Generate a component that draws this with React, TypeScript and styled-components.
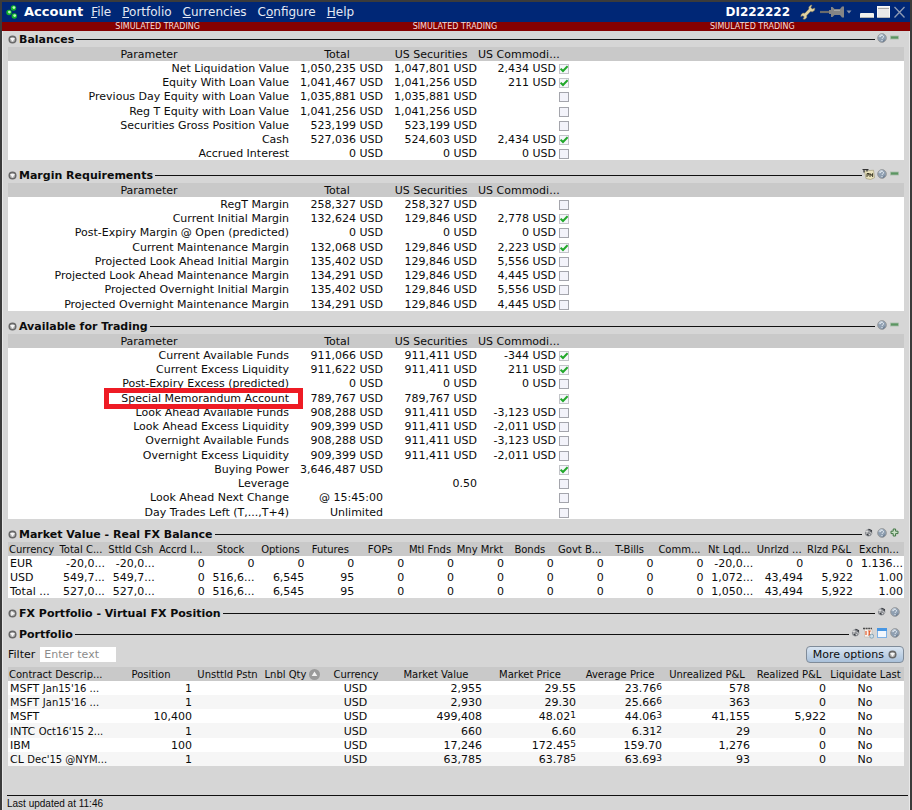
import React, { useState } from "react";
import styled, { createGlobalStyle } from "styled-components";

const GlobalStyle = createGlobalStyle`
  *, *::before, *::after { box-sizing: border-box; }
  body {
    margin: 0;
    background: #d6d6d6;
    color: #0c0c0c;
    font: 11px/14px "DejaVu Sans", Verdana, sans-serif;
  }
  button, input { font: inherit; color: inherit; }
`;

/* ---------- window frame ---------- */

const Window = styled.div`
  display: flex;
  flex-direction: column;
  min-height: 100vh;
  border: solid #3b3b3b;
  border-width: 2px 2px 0;
`;

const TitleBar = styled.header`
  display: flex;
  align-items: center;
  height: 20px;
  padding: 0 4px;
  background: #002776;
  color: #e4e9f4;
`;

const AppName = styled.h1`
  margin: 0 8px 0 5px;
  font-size: 13px;
  line-height: 20px;
  color: #fff;
`;

const Menu = styled.nav`
  display: flex;
  gap: 11px;
`;

const MenuButton = styled.button`
  padding: 0;
  border: 0;
  background: none;
  font-size: 12px;
  line-height: 20px;
  color: #e4e9f4;
`;

const AccountId = styled.span`
  margin-left: auto;
  font-size: 12px;
  font-weight: bold;
  color: #fff;
`;

const IconButton = styled.button`
  display: flex;
  align-items: center;
  justify-content: center;
  padding: 0;
  border: 0;
  background: none;
  svg { display: block; }
`;

const WindowTools = styled.div`
  display: flex;
  align-items: center;
  gap: 3px;
  margin-left: 10px;
`;

const FrameButtons = styled(WindowTools)`
  margin-left: 5px;
`;

const Banner = styled.div`
  display: grid;
  grid-template-columns: repeat(3, 1fr);
  padding: 0 9px 0 7px;
  background: #850000;
  color: #f3dede;
  font-size: 8px;
  line-height: 9px;
  text-align: center;
`;

const Body = styled.main`
  display: flex;
  flex: 1;
  flex-direction: column;
  padding: 1px 5px 0;
  border: solid #e8e8e8;
  border-width: 0 1px;
  background: #d6d6d6;
`;

/* ---------- sections ---------- */

const Section = styled.section<{ $gap?: number }>`
  margin-bottom: ${(p) => p.$gap ?? 8}px;
`;

const SectionHead = styled.div`
  display: flex;
  align-items: center;
  height: 15px;
`;

const SectionTitle = styled.h2`
  margin: 0 2px;
  font-size: 11px;
  line-height: 15px;
  white-space: nowrap;
`;

const Rule = styled.hr`
  flex: 1;
  height: 1px;
  margin: 0;
  border: 0;
  background: #111;
`;

const SectionTools = styled.div`
  display: flex;
  align-self: flex-start;
  padding-right: 3px;
`;

const ToolButton = styled(IconButton)`
  width: 13px;
  height: 11px;
`;

/* ---------- tables ---------- */

const Table = styled.table`
  width: 100%;
  table-layout: fixed;
  border-collapse: collapse;
  background: #fff;

  th, td {
    height: 14px;
    padding: 2px 1px 0 0;
    line-height: 12px;
    font-weight: normal;
    text-align: right;
    white-space: nowrap;
  }
  thead th {
    padding-right: 0;
    background: #c9c9c9;
    text-align: center;
  }
  tbody tr:nth-child(4n) > * { height: 15px; }
`;

const DenseTable = styled(Table)`
  thead th { font-size: 10px; }
  tbody th { padding-left: 2px; text-align: left; }
  thead th:first-child { padding-left: 1px; text-align: left; }
`;

const StripedTable = styled(DenseTable)`
  tbody tr:nth-child(even) { background: #f6f6f6; }
`;

const Col = styled.col<{ $w?: number }>`
  width: ${(p) => (p.$w ? `${p.$w}px` : "auto")};
`;

const LabelCell = styled.th`
  position: relative;
`;

const Highlight = styled.span`
  position: absolute;
  z-index: 1;
  inset: -2px -13px -4px 96px;
  border: 5px solid #ee1b24;
  pointer-events: none;
`;

const CheckCell = styled.td`
  && { text-align: left; }
`;

const tick =
  "url(\"data:image/svg+xml,%3Csvg xmlns='http://www.w3.org/2000/svg' viewBox='0 0 8 8'%3E%3Cpath d='M.6 3.600 3 6 7.600 1.200' fill='none' stroke='%2322a82a' stroke-width='2'/%3E%3C/svg%3E\")";

const Check = styled.input`
  display: block;
  width: 10px;
  height: 10px;
  margin: 0 0 0 2px;
  appearance: none;
  border: 1px solid #a4a5ac;
  background: #f3f3fa;
  &:checked {
    border-color: #c2c4c8;
    background: #f6f6fb ${tick} center / 8px 8px no-repeat;
  }
`;

const CenterCell = styled.td`
  && { text-align: center; }
`;

const Small = styled.span`
  font-size: 10px;
`;

const Thousandth = styled.span`
  font-size: 9px;
  line-height: 1;
  vertical-align: 2px;
`;

const SortIcon = styled.svg`
  margin-left: 3px;
  vertical-align: -2px;
`;

/* ---------- filter and footer ---------- */

const FilterBar = styled.div`
  display: flex;
  align-items: center;
  justify-content: space-between;
  height: 17px;
  margin: 4px 0;
`;

const FilterLabel = styled.label`
  display: flex;
  align-items: center;
  gap: 5px;
`;

const FilterInput = styled.input`
  width: 76px;
  height: 15px;
  padding: 0 4px;
  border: 0;
  background: #fff;
  &::placeholder { color: #8b8b8b; opacity: 1; }
`;

const MoreButton = styled.button`
  display: flex;
  align-items: center;
  gap: 4px;
  height: 17px;
  padding: 0 6px;
  border: 1px solid #7f8b99;
  border-radius: 4px;
  background: linear-gradient(#d9e5f1, #a9c0da);
`;

const Footer = styled.footer`
  margin: auto -4px 0 -1px;
  padding-top: 2px;
  border-top: 1px solid #111;
  font: 10px/12px "Liberation Sans", Arial, sans-serif;
`;

/* ---------- icons ---------- */

const Logo = () => (
  <svg width="13" height="16" viewBox="0 0 13 16" aria-hidden="true">
    {[[7.5, 4], [3, 8.5], [8.3, 12]].map(([x, y]) => (
      <g key={x}>
        <circle cx={x} cy={y} r="2.700" fill="#12b428" />
        <circle cx={x + 0.4} cy={y - 0.4} r="1.400" fill="#bdf5c0" />
      </g>
    ))}
  </svg>
);

const WrenchIcon = () => (
  <svg width="16" height="16" viewBox="0 0 16 16">
    <path
      d="M10.6 1.2 12 1l-1.2 2.6 1.5 1.4L14.8 4l-.2 2.2-2 1.6-2.2-.2-3.7 4 .1 2L5 15.2l-2.1-.1 1.3-2.2-1.2-1.2-2.2.9.3-2 1.8-1.5 2 .1 4-4.2-.1-1.9z"
      fill="#e2d3a0"
      stroke="#8b7c52"
      strokeWidth=".5"
    />
  </svg>
);

const PinIcon = () => (
  <svg width="33" height="14" viewBox="0 0 33 14">
    <path d="M1 7h10" stroke="#6b6b6b" strokeWidth="2.200" />
    <path d="M10 5h2V2h1.500l2 2h5.500l2-2.500h2v11h-2l-2-2.500h-5.500l-2 2H12V9h-2z" fill="#858585" />
    <path d="M15 5.500h6" stroke="#a6a6a6" />
    <path d="M27.500 5.500h5L30 8.500z" fill="#8a93a8" />
  </svg>
);

const MinimizeIcon = () => (
  <svg width="14" height="14" viewBox="0 0 14 14">
    <rect y="8" width="14" height="5" rx="1" fill="#f1f1ee" />
    <path d="M1 12.500h12" stroke="#b5b5b0" />
  </svg>
);

const MaximizeIcon = () => (
  <svg width="13" height="14" viewBox="0 0 13 14">
    <rect x=".5" y="1.500" width="12" height="11" fill="#e9e9e9" stroke="#f8f8f8" />
    <path d="M1 3.500h11" stroke="#a8a8a8" />
    <path d="M0 12.500h13" stroke="#b8b8b8" />
  </svg>
);

const CloseIcon = () => (
  <svg width="13" height="14" viewBox="0 0 13 14">
    <path d="m1.500 2 10 10.500M11.500 2l-10 10.500" stroke="#8f9cb4" strokeWidth="1.300" />
  </svg>
);

const Toggle = ({ open = true }: { open?: boolean }) => (
  <svg width="9" height="9" viewBox="0 0 9 9">
    <circle cx="4.500" cy="4.500" r="3.300" fill="#b0b0b0" stroke="#686868" strokeWidth="1.500" />
    <path d={open ? "M2.100 2.900h4.800L4.500 6.700z" : "M3.200 2.100v4.800l3.600-2.400z"} fill="#f6f6f6" />
  </svg>
);

const HelpIcon = () => (
  <svg width="10" height="10" viewBox="0 0 10 10">
    <circle cx="5" cy="5" r="4.400" fill="#8f9fb1" stroke="#959595" strokeWidth=".8" />
    <path d="M1.500 3.500A4 4 0 0 1 6 1.200L3 4.500z" fill="#c3cdd8" />
    <path d="M3.400 3.700c.1-1.600 3.300-1.600 3.200.1 0 1.100-1.600 1-1.600 2.200M5 7v1" fill="none" stroke="#e6edf4" strokeWidth="1" />
    <path d="M7.800 6.500A3.800 3.800 0 0 1 5.800 8.600" fill="none" stroke="#5e7085" />
  </svg>
);

const MinusIcon = () => (
  <svg width="9" height="9" viewBox="0 0 9 9">
    <rect x=".5" y="3" width="8" height="3" fill="#5b9561" stroke="#a9bfaa" strokeWidth=".8" />
  </svg>
);

const PlusIcon = () => (
  <svg width="9" height="9" viewBox="0 0 9 9">
    <path d="M3.200 1h2.400v2.200H8v2.400H5.600V8H3.200V5.600H1V3.200h2.200z" fill="#c9e0c5" stroke="#3f7442" />
  </svg>
);

const GearIcon = () => (
  <svg width="9" height="9" viewBox="0 0 9 9">
    <path d="M.8 5 2 2 5 .8l3 1.400.3 3.300L6.500 8 4 8.400 1.500 7.200z" fill="#8b8e93" />
    <path d="M1.500 3.500h3M3 2v4M5.500 4 7.500 5.500M4.500 6.500H6" stroke="#dedede" strokeWidth=".9" />
    <path d="M4.500 1.200 7.500 2.500 7 4.200M3 6l1.500 1.500" fill="none" stroke="#3a3d42" strokeWidth="1.100" />
  </svg>
);

const NoteIcon = () => (
  <svg width="13" height="12" viewBox="0 0 13 12">
    <path d="m2.500 3 9-.8 1 7.500-4 1.800-4.500-1z" fill="#e9e2bd" stroke="#9b946e" strokeWidth=".6" />
    <path d="M.5 1.500h6M2 1.500v3M5 2v1.500" stroke="#333" strokeWidth="1.200" />
    <path d="M5 9V5.500h2V7H5.500M8 9V5.500l1.300 2 1.300-2V9" fill="none" stroke="#2d2a1a" strokeWidth=".9" />
  </svg>
);

const CalendarIcon = () => (
  <svg width="11" height="12" viewBox="0 0 11 12">
    <path d="M1.500 2h7.500v8h-7.500z" fill="#f8f4ef" stroke="#bdb6b0" strokeWidth=".6" />
    <path d="M0 1.500h9" stroke="#4b4b4b" strokeWidth="1.300" strokeDasharray="2 .6" />
    <path d="M3 4v4M5 4h2L6 6l1 2H5" fill="none" stroke="#e0592a" strokeWidth="1.200" />
    <circle cx="8.700" cy="9.200" r="2" fill="#cfe0ea" stroke="#6c93aa" strokeWidth=".7" />
  </svg>
);

const WindowIcon = () => (
  <svg width="10" height="10" viewBox="0 0 10 10">
    <rect x=".5" y=".5" width="9" height="9" fill="#f2f7fd" stroke="#7fb2e6" />
    <rect width="10" height="3" fill="#4796e3" />
  </svg>
);

type ToolKind = "note" | "gear" | "calendar" | "window" | "help" | "minus" | "plus";

const TOOLS: Record<ToolKind, [string, () => React.ReactElement]> = {
  note: ["Portfolio margin", NoteIcon],
  gear: ["Configure section", GearIcon],
  calendar: ["Expirations", CalendarIcon],
  window: ["Open in window", WindowIcon],
  help: ["Section help", HelpIcon],
  minus: ["Show less", MinusIcon],
  plus: ["Show more", PlusIcon],
};

/* ---------- data ---------- */

type ParamRow = {
  label: string;
  total?: string;
  sec?: string;
  com?: string;
  on?: boolean;
  mark?: boolean;
};

const row = (label: string, total = "", sec = "", com = "", on = false, mark = false): ParamRow => ({
  label, total, sec, com, on, mark,
});

const BALANCES = [
  row("Net Liquidation Value", "1,050,235 USD", "1,047,801 USD", "2,434 USD", true),
  row("Equity With Loan Value", "1,041,467 USD", "1,041,256 USD", "211 USD", true),
  row("Previous Day Equity with Loan Value", "1,035,881 USD", "1,035,881 USD"),
  row("Reg T Equity with Loan Value", "1,041,256 USD", "1,041,256 USD"),
  row("Securities Gross Position Value", "523,199 USD", "523,199 USD"),
  row("Cash", "527,036 USD", "524,603 USD", "2,434 USD", true),
  row("Accrued Interest", "0 USD", "0 USD", "0 USD"),
];

const MARGIN = [
  row("RegT Margin", "258,327 USD", "258,327 USD"),
  row("Current Initial Margin", "132,624 USD", "129,846 USD", "2,778 USD", true),
  row("Post-Expiry Margin @ Open (predicted)", "0 USD", "0 USD", "0 USD"),
  row("Current Maintenance Margin", "132,068 USD", "129,846 USD", "2,223 USD", true),
  row("Projected Look Ahead Initial Margin", "135,402 USD", "129,846 USD", "5,556 USD"),
  row("Projected Look Ahead Maintenance Margin", "134,291 USD", "129,846 USD", "4,445 USD"),
  row("Projected Overnight Initial Margin", "135,402 USD", "129,846 USD", "5,556 USD"),
  row("Projected Overnight Maintenance Margin", "134,291 USD", "129,846 USD", "4,445 USD"),
];

const AVAILABLE = [
  row("Current Available Funds", "911,066 USD", "911,411 USD", "-344 USD", true),
  row("Current Excess Liquidity", "911,622 USD", "911,411 USD", "211 USD", true),
  row("Post-Expiry Excess (predicted)", "0 USD", "0 USD", "0 USD"),
  row("Special Memorandum Account", "789,767 USD", "789,767 USD", "", true, true),
  row("Look Ahead Available Funds", "908,288 USD", "911,411 USD", "-3,123 USD"),
  row("Look Ahead Excess Liquidity", "909,399 USD", "911,411 USD", "-2,011 USD"),
  row("Overnight Available Funds", "908,288 USD", "911,411 USD", "-3,123 USD"),
  row("Overnight Excess Liquidity", "909,399 USD", "911,411 USD", "-2,011 USD"),
  row("Buying Power", "3,646,487 USD", "", "", true),
  row("Leverage", "", "0.50"),
  row("Look Ahead Next Change", "@ 15:45:00"),
  row("Day Trades Left (T,...,T+4)", "Unlimited"),
];

const FX_COLUMNS = [
  "Currency", "Total C...", "Sttld Csh", "Accrd I...", "Stock", "Options", "Futures", "FOPs", "Mtl Fnds",
  "Mny Mrkt", "Bonds", "Govt B...", "T-Bills", "Comm...", "Nt Lqd...", "Unrlzd ...", "Rlzd P&L", "Exchn...",
];

const FX_ROWS = [
  ["EUR", "-20,0...", "-20,0...", "0", "0", "0", "0", "0", "0", "0", "0", "0", "0", "0", "-20,0...", "0", "0", "1.136..."],
  ["USD", "549,7...", "549,7...", "0", "516,6...", "6,545", "95", "0", "0", "0", "0", "0", "0", "0", "1,072...", "43,494", "5,922", "1.00"],
  ["Total ...", "527,0...", "527,0...", "0", "516,6...", "6,545", "95", "0", "0", "0", "0", "0", "0", "0", "1,050...", "43,494", "5,922", "1.00"],
];

const POSITION_COLUMNS: [string, number][] = [
  ["Contract Descrip...", 101], ["Position", 84], ["Unsttld Pstn", 69], ["Lnbl Qty", 61], ["Currency", 66],
  ["Market Value", 94], ["Market Price", 94], ["Average Price", 86], ["Unrealized P&L", 88],
  ["Realized P&L", 76], ["Liquidate Last", 77],
];

/* A price is the pair [two-decimal part, third decimal]. */
type Price = [string, string];
type Position = {
  symbol: string; detail: string; qty: string; value: string;
  price: Price; average: Price; unrealized: string; realized: string;
};

const POSITIONS: Position[] = [
  { symbol: "MSFT", detail: "Jan15'16 ...", qty: "1", value: "2,955", price: ["29.55", ""], average: ["23.76", "6"], unrealized: "578", realized: "0" },
  { symbol: "MSFT", detail: "Jan15'16 ...", qty: "1", value: "2,930", price: ["29.30", ""], average: ["25.66", "6"], unrealized: "363", realized: "0" },
  { symbol: "MSFT", detail: "", qty: "10,400", value: "499,408", price: ["48.02", "1"], average: ["44.06", "3"], unrealized: "41,155", realized: "5,922" },
  { symbol: "INTC", detail: "Oct16'15 2...", qty: "1", value: "660", price: ["6.60", ""], average: ["6.31", "2"], unrealized: "29", realized: "0" },
  { symbol: "IBM", detail: "", qty: "100", value: "17,246", price: ["172.45", "5"], average: ["159.70", ""], unrealized: "1,276", realized: "0" },
  { symbol: "CL", detail: "Dec'15 @NYM...", qty: "1", value: "63,785", price: ["63.78", "5"], average: ["63.69", "3"], unrealized: "93", realized: "0" },
];

/* ---------- components ---------- */

const MenuItem = ({ text, at = 0 }: { text: string; at?: number }) => (
  <MenuButton type="button">
    {text.slice(0, at)}
    <u>{text[at]}</u>
    {text.slice(at + 1)}
  </MenuButton>
);

function Heading({ title, tools, open = true }: { title: string; tools: ToolKind[]; open?: boolean }) {
  return (
    <SectionHead>
      <IconButton type="button" aria-label={`Toggle ${title}`} aria-expanded={open}>
        <Toggle open={open} />
      </IconButton>
      <SectionTitle>{title}</SectionTitle>
      <Rule />
      <SectionTools>
        {tools.map((kind) => {
          const [label, Icon] = TOOLS[kind];
          return (
            <ToolButton key={kind} type="button" aria-label={label}>
              <Icon />
            </ToolButton>
          );
        })}
      </SectionTools>
    </SectionHead>
  );
}

function ParamTable({ rows }: { rows: ParamRow[] }) {
  const [checked, setChecked] = useState(rows.map((r) => !!r.on));
  return (
    <Table>
      <colgroup>
        <Col $w={282} />
        <Col $w={94} />
        <Col $w={94} />
        <Col $w={79} />
        <Col />
      </colgroup>
      <thead>
        <tr>
          <th scope="col">Parameter</th>
          <th scope="col">Total</th>
          <th scope="col">US Securities</th>
          <th scope="col">US Commodi...</th>
          <th />
        </tr>
      </thead>
      <tbody>
        {rows.map((r, i) => (
          <tr key={r.label}>
            <LabelCell scope="row">
              {r.label}
              {r.mark && <Highlight />}
            </LabelCell>
            <td>{r.total}</td>
            <td>{r.sec}</td>
            <td>{r.com}</td>
            <CheckCell>
              <Check
                type="checkbox"
                aria-label={`Pin ${r.label}`}
                checked={checked[i]}
                onChange={() => setChecked(checked.map((c, j) => (j === i ? !c : c)))}
              />
            </CheckCell>
          </tr>
        ))}
      </tbody>
    </Table>
  );
}

const PriceCell = ({ value }: { value: Price }) => (
  <td>
    {value[0]}
    {value[1] && <Thousandth>{value[1]}</Thousandth>}
  </td>
);

export default function App() {
  return (
    <Window>
      <GlobalStyle />
      <TitleBar>
        <Logo />
        <AppName>Account</AppName>
        <Menu>
          <MenuItem text="File" />
          <MenuItem text="Portfolio" />
          <MenuItem text="Currencies" />
          <MenuItem text="Configure" at={1} />
          <MenuItem text="Help" />
        </Menu>
        <AccountId>DI222222</AccountId>
        <WindowTools>
          <IconButton type="button" aria-label="Settings"><WrenchIcon /></IconButton>
          <IconButton type="button" aria-label="Pin window"><PinIcon /></IconButton>
          <FrameButtons>
            <IconButton type="button" aria-label="Minimize"><MinimizeIcon /></IconButton>
            <IconButton type="button" aria-label="Maximize"><MaximizeIcon /></IconButton>
            <IconButton type="button" aria-label="Close"><CloseIcon /></IconButton>
          </FrameButtons>
        </WindowTools>
      </TitleBar>
      <Banner>
        <span>SIMULATED TRADING</span>
        <span>SIMULATED TRADING</span>
        <span>SIMULATED TRADING</span>
      </Banner>
      <Body>
        <Section>
          <Heading title="Balances" tools={["help", "minus"]} />
          <ParamTable rows={BALANCES} />
        </Section>
        <Section>
          <Heading title="Margin Requirements" tools={["note", "help", "minus"]} />
          <ParamTable rows={MARGIN} />
        </Section>
        <Section>
          <Heading title="Available for Trading" tools={["help", "minus"]} />
          <ParamTable rows={AVAILABLE} />
        </Section>
        <Section>
          <Heading title="Market Value - Real FX Balance" tools={["gear", "help", "plus"]} />
          <DenseTable>
            <colgroup>
              {FX_COLUMNS.map((c, i) => <Col key={c} $w={i === 0 ? 48 : undefined} />)}
            </colgroup>
            <thead>
              <tr>{FX_COLUMNS.map((c) => <th key={c} scope="col">{c}</th>)}</tr>
            </thead>
            <tbody>
              {FX_ROWS.map(([name, ...cells]) => (
                <tr key={name}>
                  <th scope="row">{name}</th>
                  {cells.map((c, i) => <td key={i}>{c}</td>)}
                </tr>
              ))}
            </tbody>
          </DenseTable>
        </Section>
        <Section $gap={6}>
          <Heading title="FX Portfolio - Virtual FX Position" tools={["gear", "help"]} open={false} />
        </Section>
        <Section>
          <Heading title="Portfolio" tools={["gear", "calendar", "window", "help"]} />
          <FilterBar>
            <FilterLabel>
              Filter
              <FilterInput type="text" placeholder="Enter text" />
            </FilterLabel>
            <MoreButton type="button">
              More options <Toggle />
            </MoreButton>
          </FilterBar>
          <StripedTable>
            <colgroup>
              {POSITION_COLUMNS.map(([c, w]) => <Col key={c} $w={w} />)}
            </colgroup>
            <thead>
              <tr>
                {POSITION_COLUMNS.map(([c]) => (
                  <th key={c} scope="col">
                    {c}
                    {c === "Lnbl Qty" && (
                      <SortIcon width="11" height="11" viewBox="0 0 11 11" aria-label="Sorted ascending">
                        <circle cx="5.500" cy="5.500" r="5.500" fill="#9a9a9a" />
                        <path d="M5.500 2.500 8.300 7H2.700z" fill="#f2f2f2" />
                      </SortIcon>
                    )}
                  </th>
                ))}
              </tr>
            </thead>
            <tbody>
              {POSITIONS.map((p, i) => (
                <tr key={i}>
                  <th scope="row">{p.symbol} <Small>{p.detail}</Small></th>
                  <td>{p.qty}</td>
                  <td />
                  <td />
                  <CenterCell>USD</CenterCell>
                  <td>{p.value}</td>
                  <PriceCell value={p.price} />
                  <PriceCell value={p.average} />
                  <td>{p.unrealized}</td>
                  <td>{p.realized}</td>
                  <CenterCell>No</CenterCell>
                </tr>
              ))}
            </tbody>
          </StripedTable>
        </Section>
        <Footer>Last updated at 11:46</Footer>
      </Body>
    </Window>
  );
}
